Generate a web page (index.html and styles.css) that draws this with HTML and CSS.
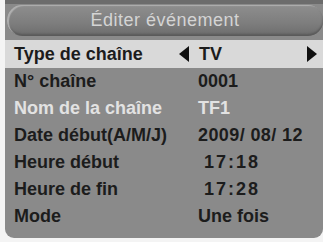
FILE: index.html
```
<!DOCTYPE html>
<html lang="fr">
<head>
    <meta charset="UTF-8">
    <title>Éditer événement</title>
    <link rel="stylesheet" href="styles.css">
</head>
<body>
<div class="screen">
    <div class="title">Éditer événement</div>

    <div class="menu">
        <div class="row selected">
            <span class="label">Type de chaîne</span>
            <span class="arrow left"></span>
            <span class="value">TV</span>
            <span class="arrow right"></span>
        </div>
        <div class="row">
            <span class="label">N° chaîne</span>
            <span class="value">0001</span>
        </div>
        <div class="row disabled">
            <span class="label">Nom de la chaîne</span>
            <span class="value">TF1</span>
        </div>
        <div class="row">
            <span class="label">Date début(A/M/J)</span>
            <span class="value date">2009/ 08/ 12</span>
        </div>
        <div class="row">
            <span class="label">Heure début</span>
            <span class="value time">17:18</span>
        </div>
        <div class="row">
            <span class="label">Heure de fin</span>
            <span class="value time">17:28</span>
        </div>
        <div class="row">
            <span class="label">Mode</span>
            <span class="value">Une fois</span>
        </div>
    </div>
</div>
</body>
</html>
```

FILE: styles.css
```
body {
    margin: 0;
    background-color: #f4f4f4;
    font-family: "Liberation Sans", Arial, sans-serif;
}
.screen {
    margin-left: 5px;
    width: 318px;
    height: 234px;
    border-top: 4px solid #6c6c6c;
    background-color: #8a8a8a;
    border-radius: 0 0 9px 9px;
    overflow: hidden;
}
.title {
    margin: 1px 0 0 2px;
    height: 31px;
    line-height: 31px;
    border-radius: 15px;
    text-align: center;
    font-size: 18px;
    letter-spacing: 0.5px;
    color: #d4d4d4;
    background: linear-gradient(#8e8e8e, #7d7d7d 60%, #6c6c6c);
    box-shadow: inset 2px 1px 1px #b0b0b0, inset 0 -2px 2px #5a5a5a;
}
.menu {
    margin-top: 4px;
}
.row {
    display: flex;
    align-items: center;
    height: 27px;
    padding-left: 9px;
    font-size: 18px;
    font-weight: bold;
    color: #1c1c1c;
}
.row.selected {
    height: 28px;
    background-color: #d9d9d9;
}
.row.disabled {
    color: #e2e2e2;
}
.label {
    width: 184px;
}
.value {
    flex: 1;
}
.value.date {
    letter-spacing: 0.4px;
}
.value.time {
    padding-left: 6px;
    letter-spacing: 2px;
}
.selected .label {
    width: 165px;
}
.selected .value {
    padding-left: 10px;
}
.arrow {
    width: 0;
    height: 0;
    border-top: 8px solid transparent;
    border-bottom: 8px solid transparent;
}
.arrow.left {
    border-right: 10px solid #101010;
}
.arrow.right {
    margin-right: 6px;
    border-left: 10px solid #101010;
}
```
